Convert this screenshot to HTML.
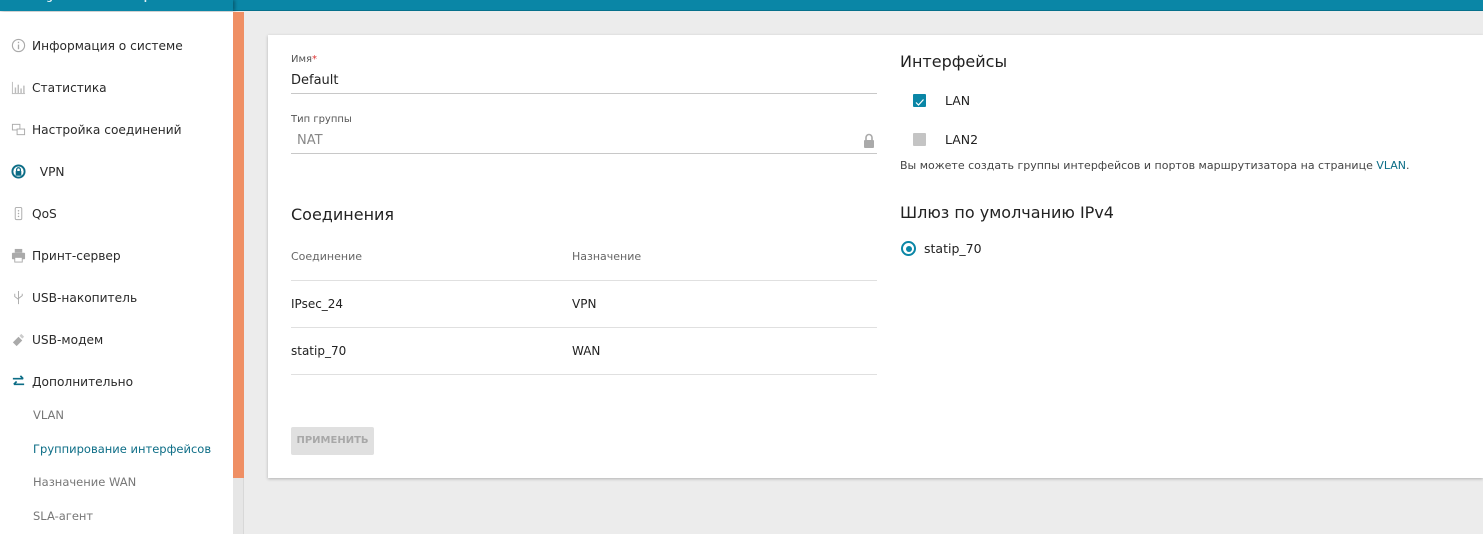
<!DOCTYPE html>
<html><head><meta charset="utf-8"><style>
*{margin:0;padding:0;box-sizing:border-box}
body{width:1483px;height:534px;overflow:hidden;background:#ececec;font-family:"DejaVu Sans","Liberation Sans",sans-serif;color:#222;position:relative}
.hdr{position:absolute;left:0;top:0;width:1483px;height:11px;background:#0a86a6;border-bottom:1px solid #06708b}
.hdr .l{position:absolute;left:0;top:0;width:233px;height:11px;background:#0a86a6;box-shadow:2px 0 3px rgba(0,0,0,.3)}
.hdr span{position:absolute;left:11px;top:-7px;font-size:9px;color:#dfeff5;font-weight:bold}
.side{position:absolute;left:0;top:12px;width:233px;height:522px;background:#fff}
.it{position:absolute;left:11px;font-size:12.2px;color:#2a2a2a;display:flex;align-items:center}
.it svg{width:15px;height:15px;margin-right:6px}
.sub{position:absolute;left:33px;font-size:11.5px;color:#777}
.track{position:absolute;left:233px;top:12px;width:11px;height:522px;background:#e6e6e6;border-right:1px solid #d8d8d8}
.thumb{position:absolute;left:233px;top:12px;width:11px;height:466px;background:#ef8f64}
.card{position:absolute;left:268px;top:35px;width:1215px;height:443px;background:#fff;box-shadow:0 1px 3px rgba(0,0,0,.25)}
.lbl{position:absolute;font-size:10px;color:#555}
.val{position:absolute;font-size:13px}
.line{position:absolute;height:1px;background:#c8c8c8}
.h{position:absolute;font-size:16px;color:#222}
.t{position:absolute;font-size:12px}
</style></head><body>
<div class="hdr"><div class="l"></div><span>Building Networks for People</span></div>
<div class="side">
<div class="it" style="top:26px"><svg viewBox="0 0 16 16"><circle cx="8" cy="8" r="6.5" fill="none" stroke="#aaa" stroke-width="1.2"/><rect x="7.3" y="7" width="1.4" height="5" fill="#aaa"/><rect x="7.3" y="4" width="1.4" height="1.5" fill="#aaa"/></svg>Информация о системе</div>
<div class="it" style="top:68px"><svg viewBox="0 0 16 16" fill="#bbb"><rect x="1" y="2" width="1" height="13"/><rect x="1" y="14" width="14" height="1"/><rect x="4" y="8" width="1.5" height="6"/><rect x="7" y="5" width="1.5" height="9"/><rect x="10" y="9" width="1.5" height="5"/><rect x="13" y="6" width="1.5" height="8"/></svg>Статистика</div>
<div class="it" style="top:110px"><svg viewBox="0 0 16 16" fill="none" stroke="#aaa"><rect x="1.5" y="2.5" width="8" height="6"/><rect x="6.5" y="7.5" width="8" height="6" fill="#fff"/></svg>Настройка соединений</div>
<div class="it" style="top:152px"><svg viewBox="0 0 16 16"><circle cx="8" cy="8" r="6.5" fill="none" stroke="#0c6d86" stroke-width="2"/><rect x="5" y="7.5" width="6" height="5" fill="#0c6d86"/><path d="M6 7.5V6a2 2 0 0 1 4 0v1.5" fill="none" stroke="#0c6d86" stroke-width="1.3"/></svg>&nbsp;&nbsp;VPN</div>
<div class="it" style="top:194px"><svg viewBox="0 0 16 16"><rect x="4.5" y="1.5" width="7" height="13" rx="1.5" fill="none" stroke="#aaa"/><circle cx="8" cy="5" r=".8" fill="#aaa"/><circle cx="8" cy="8" r=".8" fill="#aaa"/><circle cx="8" cy="11" r=".8" fill="#aaa"/></svg>QoS</div>
<div class="it" style="top:236px"><svg viewBox="0 0 16 16" fill="#aaa"><rect x="4" y="1" width="8" height="4"/><rect x="1" y="5" width="14" height="7" rx="1"/><rect x="4" y="10" width="8" height="5" fill="#fff" stroke="#aaa"/></svg>Принт-сервер</div>
<div class="it" style="top:278px"><svg viewBox="0 0 16 16" fill="none" stroke="#aaa"><path d="M8 1v14M4 4v3l4 3M12 4v2l-4 3"/></svg>USB-накопитель</div>
<div class="it" style="top:320px"><svg viewBox="0 0 16 16"><path d="M2 11l6-6 4 4-6 6z" fill="#aaa"/><path d="M9 4l2-2 3 3-2 2z" fill="#ccc"/></svg>USB-модем</div>
<div class="it" style="top:362px"><svg viewBox="0 0 16 16" fill="none" stroke="#0c6d86" stroke-width="1.8"><path d="M2 5h11M10 2l3 3M14 11H3M6 8l-3 3"/></svg>Дополнительно</div>
<div class="sub" style="top:396px">VLAN</div>
<div class="sub" style="top:430px;color:#0c6d86">Группирование интерфейсов</div>
<div class="sub" style="top:463px">Назначение WAN</div>
<div class="sub" style="top:497px">SLA-агент</div>
</div>
<div class="track"></div><div class="thumb"></div>
<div class="card">
<div class="lbl" style="left:23px;top:19px">Имя<span style="color:#d33">*</span></div>
<div class="val" style="left:23px;top:38px">Default</div>
<div class="line" style="left:23px;top:58px;width:586px"></div>
<div class="lbl" style="left:23px;top:79px">Тип группы</div>
<div class="val" style="left:29px;top:98px;color:#888">NAT</div>
<svg style="position:absolute;left:595px;top:98px" width="12" height="15" viewBox="0 0 12 15"><path d="M3 7V4.5a3 3 0 0 1 6 0V7" fill="none" stroke="#aaa" stroke-width="1.6"/><rect x="1" y="7" width="10" height="8" rx="1" fill="#aaa"/></svg>
<div class="line" style="left:23px;top:118px;width:586px"></div>
<div class="h" style="left:23px;top:170px">Соединения</div>
<div class="t" style="left:23px;top:215px;font-size:11px;color:#666">Соединение</div>
<div class="t" style="left:304px;top:215px;font-size:11px;color:#666">Назначение</div>
<div class="line" style="left:23px;top:245px;width:586px;background:#e0e0e0"></div>
<div class="t" style="left:23px;top:262px">IPsec_24</div><div class="t" style="left:304px;top:262px">VPN</div>
<div class="line" style="left:23px;top:292px;width:586px;background:#e0e0e0"></div>
<div class="t" style="left:23px;top:309px">statip_70</div><div class="t" style="left:304px;top:309px">WAN</div>
<div class="line" style="left:23px;top:339px;width:586px;background:#e0e0e0"></div>
<div style="position:absolute;left:23px;top:392px;width:83px;height:28px;background:#e0e0e0;border-radius:2px;color:#a8a8a8;font-size:10px;font-weight:bold;line-height:28px;text-align:center">ПРИМЕНИТЬ</div>
<div class="h" style="left:632px;top:17px">Интерфейсы</div>
<div style="position:absolute;left:645px;top:59px;width:13px;height:13px;background:#0a86a6;border-radius:1px"><svg width="13" height="13" viewBox="0 0 13 13"><path d="M3 6.5l2.5 2.5L10.5 3.5" fill="none" stroke="#fff" stroke-width="1.2"/></svg></div>
<div class="t" style="left:677px;top:58px;font-size:12.5px">LAN</div>
<div style="position:absolute;left:645px;top:98px;width:13px;height:13px;background:#c4c4c4;border-radius:1px"></div>
<div class="t" style="left:677px;top:97px;font-size:12.5px">LAN2</div>
<div class="t" style="left:632px;top:124px;font-size:11px;color:#444">Вы можете создать группы интерфейсов и портов маршрутизатора на странице <span style="color:#0c6d86">VLAN</span>.</div>
<div class="h" style="left:632px;top:168px">Шлюз по умолчанию IPv4</div>
<div style="position:absolute;left:633px;top:206px;width:15px;height:15px;border:2px solid #0a86a6;border-radius:50%"><div style="position:absolute;left:2.5px;top:2.5px;width:6px;height:6px;background:#0a86a6;border-radius:50%"></div></div>
<div class="t" style="left:656px;top:206px;font-size:12.5px">statip_70</div>
</div>
</body></html>
